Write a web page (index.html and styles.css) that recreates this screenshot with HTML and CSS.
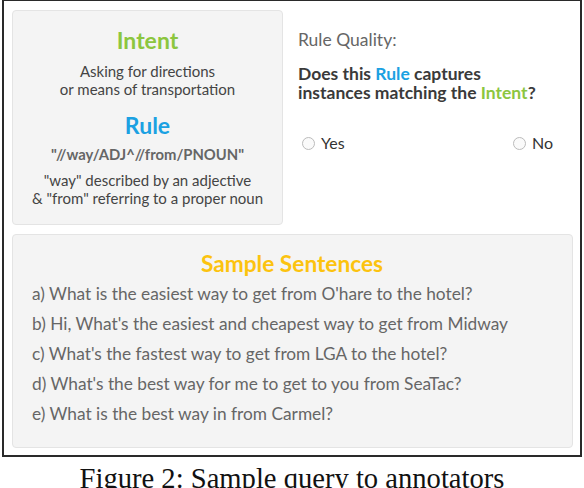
FILE: index.html
```html
<!DOCTYPE html>
<html>
<head>
<meta charset="utf-8">
<link rel="stylesheet" href="styles.css">
</head>
<body>
<div class="frame">
  <div class="top">
    <div class="card info">
      <div class="h intent">Intent</div>
      <div class="desc">Asking for directions<br>or means of transportation</div>
      <div class="h rule">Rule</div>
      <div class="pattern">"//way/ADJ^//from/PNOUN"</div>
      <div class="desc last">"way" described by an adjective<br>&amp; "from" referring to a proper noun</div>
    </div>
    <div class="quality">
      <div class="label">Rule Quality:</div>
      <div class="question">Does this <span class="blue">Rule</span> captures<br>instances matching the <span class="green">Intent</span>?</div>
      <div class="options">
        <label class="opt"><span class="radio"></span>Yes</label>
        <label class="opt"><span class="radio"></span>No</label>
      </div>
    </div>
  </div>
  <div class="card samples">
    <div class="sh">Sample Sentences</div>
    <div class="s">a) What is the easiest way to get from O'hare to the hotel?</div>
    <div class="s">b) Hi, What's the easiest and cheapest way to get from Midway</div>
    <div class="s">c) What's the fastest way to get from LGA to the hotel?</div>
    <div class="s">d) What's the best way for me to get to you from SeaTac?</div>
    <div class="s">e) What is the best way in from Carmel?</div>
  </div>
</div>
<div class="caption">Figure 2: Sample query to annotators</div>
</body>
</html>
```
FILE: styles.css
```css
html, body { margin: 0; padding: 0; background: #fff; }
body { font-family: Lato, "Open Sans", sans-serif; color: #444; width: 584px; height: 488px; overflow: hidden; }
.frame {
  margin-left: 2px;
  border: 2px solid #2a2a2a;
  border-top-width: 1px;
  padding: 9px 0 0 8px;
  box-sizing: border-box;
  width: 580px;
  height: 457px;
}
.top { display: flex; height: 215px; }
.card {
  background: #f4f4f4;
  border: 1px solid #e4e4e4;
  border-radius: 4px;
  box-sizing: border-box;
}
.info { width: 271px; height: 215px; text-align: center; padding-top: 14px; }
.h { font-weight: 700; font-size: 23px; line-height: 30px; }
.intent { color: #8cc63f; }
.rule { color: #1ba1e2; margin-top: 12px; }
.desc { font-size: 15px; line-height: 18px; color: #444; margin-top: 7px; }
.pattern { font-size: 14.8px; font-weight: 700; color: #666; line-height: 18px; margin-top: 5px; }
.desc.last { margin-top: 8px; }
.quality { flex: 1; padding: 19px 0 0 15px; }
.label { font-size: 17.5px; color: #666; line-height: 22px; }
.question { font-size: 17.5px; font-weight: 700; color: #3a3a3a; line-height: 19px; margin-top: 13px; }
.blue { color: #1ba1e2; }
.green { color: #8cc63f; }
.options { display: flex; justify-content: space-between; margin-top: 31px; padding: 0 27px 0 4px; }
.opt { display: flex; align-items: center; font-size: 16px; color: #333; gap: 6px; }
.radio { width: 11px; height: 11px; border: 1px solid #bbb; border-radius: 50%; background: #fafafa; margin-top: 2px; }
.samples { width: 561px; height: 214px; margin-top: 9px; padding: 15px 0 0 19px; }
.sh { text-align: center; color: #fcc30f; font-weight: 700; font-size: 22.7px; line-height: 28px; padding-right: 20px; margin-bottom: 1px; }
.s { font-size: 17.3px; color: #666; line-height: 30px; }
.caption { font-family: "Liberation Serif", serif; font-size: 28.6px; color: #111; text-align: center; margin-top: 6px; line-height: 32px; }
```
